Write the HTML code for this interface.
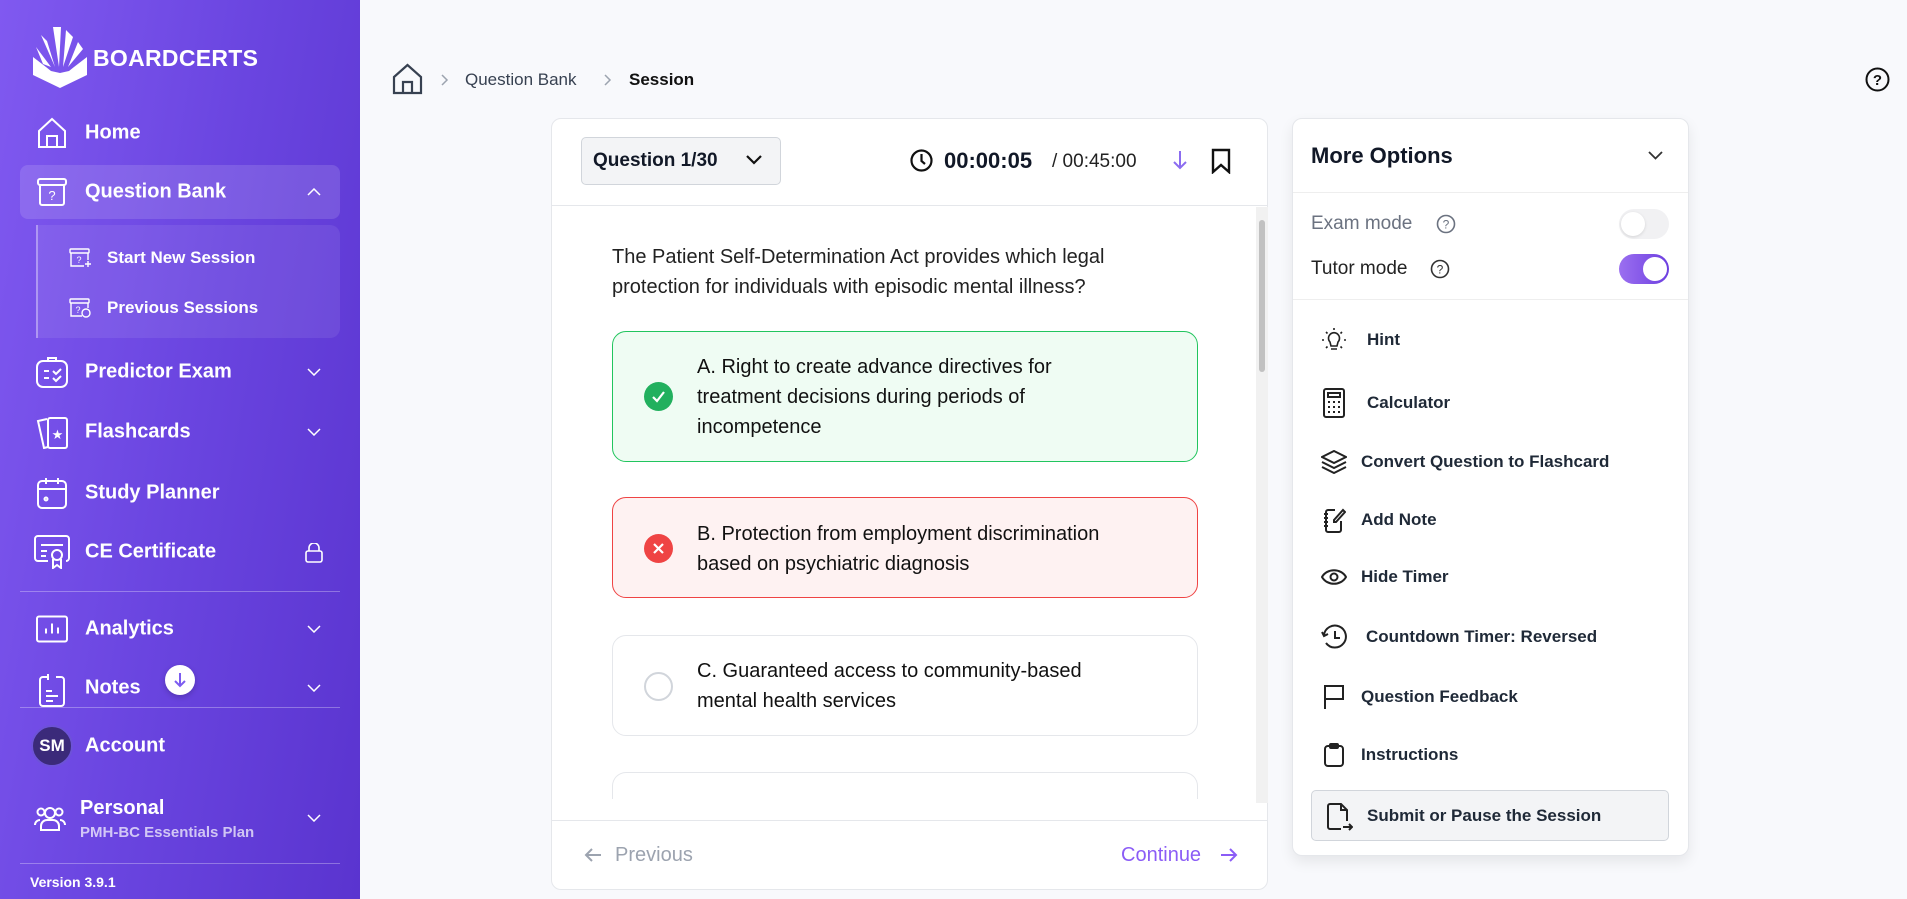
<!DOCTYPE html>
<html><head><meta charset="utf-8"><style>
*{box-sizing:border-box;margin:0;padding:0}
body{width:1907px;height:899px;overflow:hidden;background:#f8f9fc;font-family:"Liberation Sans",sans-serif;position:relative;color:#111827}
.sb{position:absolute;left:0;top:0;width:360px;height:899px;background:linear-gradient(100deg,#8059f0 0%,#6a45e0 50%,#5a34cf 100%);color:#fff}
.abs{position:absolute}
.nav{position:absolute;left:85px;font-size:20px;font-weight:bold;transform:translateY(-50%)}
.ic{position:absolute;transform:translate(-50%,-50%)}
.chev{position:absolute;left:314px;transform:translate(-50%,-50%)}
.sub{position:absolute;left:107px;font-size:17px;font-weight:bold;transform:translateY(-50%)}
.hr{position:absolute;left:20px;width:320px;height:1px;background:rgba(255,255,255,.3)}
.card{position:absolute;background:#fff;border:1px solid #e5e7eb;border-radius:10px}
.opt{position:absolute;left:612px;width:586px;border-radius:14px;border:1px solid #e5e7eb;background:#fff}
.opt .t{position:absolute;left:84px;font-size:20px;line-height:30px;color:#111}
.mi{position:absolute;left:1361px;font-size:17px;font-weight:bold;color:#1f2937;transform:translateY(-50%)}
.mic{position:absolute;left:1334px;transform:translate(-50%,-50%)}
</style></head><body>
<div class="sb">
 <svg class="abs" style="left:33px;top:27px" width="54" height="61" viewBox="0 0 54 61"><path d="M0 30 L13 40 L18 44 L27 46 L36 44 L41 40 L54 30 L54 48 L27 61 L0 48Z" fill="#fff"/><path d="M3 20 L18 40 L10 37Z M8 8 L22 40 L14 14Z M20 0 L28 0 L26 40Z M33 3 L40 10 L30 40Z M45 15 L50 22 L35 40Z" fill="#fff"/></svg>
 <div class="abs" style="left:93px;top:45px;font-size:23px;font-weight:bold;letter-spacing:0.3px">BOARDCERTS</div>

 <svg class="ic" style="left:52px;top:133px" width="30" height="32" viewBox="0 0 30 32" fill="none" stroke="#fff" stroke-width="2"><path d="M2 14 L15 2 L28 14 V30 H2Z M10 30 V19 H20 V30"/></svg>
 <div class="nav" style="top:133px">Home</div>

 <div class="abs" style="left:20px;top:165px;width:320px;height:54px;background:rgba(255,255,255,.13);border-radius:8px"></div>
 <svg class="ic" style="left:52px;top:192px" width="30" height="28" viewBox="0 0 30 28" fill="none" stroke="#fff" stroke-width="2"><rect x="1" y="1" width="28" height="6" rx="2"/><path d="M3 7 V25 a2 2 0 0 0 2 2 H25 a2 2 0 0 0 2 -2 V7"/><text x="15" y="22" fill="#fff" stroke="none" font-size="13" text-anchor="middle" font-family="Liberation Sans">?</text></svg>
 <div class="nav" style="top:192px">Question Bank</div>
 <svg class="chev" style="top:192px" width="14" height="8" viewBox="0 0 14 8" fill="none" stroke="#fff" stroke-width="1.5"><path d="M1 7 L7 1 L13 7"/></svg>

 <div class="abs" style="left:36px;top:225px;width:304px;height:113px;background:rgba(255,255,255,.08);border-radius:0 10px 10px 0;border-left:2px solid rgba(255,255,255,.35)"></div>
 <svg class="ic" style="left:80px;top:258px" width="22" height="20" viewBox="0 0 22 20" fill="none" stroke="#fff" stroke-width="1.4"><rect x="1" y="1" width="19" height="4" rx="1"/><path d="M2 5 V18 H15 M19 5 V12 M16 16 H22 M19 13 V19"/><text x="10" y="15" fill="#fff" stroke="none" font-size="9" text-anchor="middle">?</text></svg>
 <div class="sub" style="top:258px">Start New Session</div>
 <svg class="ic" style="left:80px;top:308px" width="22" height="20" viewBox="0 0 22 20" fill="none" stroke="#fff" stroke-width="1.4"><rect x="1" y="1" width="19" height="4" rx="1"/><path d="M2 5 V18 H13 M19 5 V10"/><circle cx="17" cy="15" r="4"/><text x="9" y="15" fill="#fff" stroke="none" font-size="9" text-anchor="middle">?</text></svg>
 <div class="sub" style="top:308px">Previous Sessions</div>

 <svg class="ic" style="left:52px;top:372px" width="32" height="32" viewBox="0 0 32 32" fill="none" stroke="#fff" stroke-width="2"><rect x="1" y="5" width="30" height="26" rx="6"/><path d="M12 5 V2 H20 V5 M8 15 H13 M8 22 H13 M17 15 l3 3 l5 -5 M17 22 l3 3 l5 -5"/></svg>
 <div class="nav" style="top:372px">Predictor Exam</div>
 <svg class="chev" style="top:372px" width="14" height="8" viewBox="0 0 14 8" fill="none" stroke="#fff" stroke-width="1.5"><path d="M1 1 L7 7 L13 1"/></svg>

 <svg class="ic" style="left:52px;top:432px" width="34" height="34" viewBox="0 0 34 34" fill="none" stroke="#fff" stroke-width="2"><path d="M12 4 L3 6 L9 33 L13 32"/><rect x="13" y="3" width="19" height="30" rx="2"/><text x="22.5" y="24" fill="#fff" stroke="none" font-size="13" text-anchor="middle">★</text></svg>
 <div class="nav" style="top:432px">Flashcards</div>
 <svg class="chev" style="top:432px" width="14" height="8" viewBox="0 0 14 8" fill="none" stroke="#fff" stroke-width="1.5"><path d="M1 1 L7 7 L13 1"/></svg>

 <svg class="ic" style="left:52px;top:493px" width="30" height="32" viewBox="0 0 30 32" fill="none" stroke="#fff" stroke-width="2"><rect x="1" y="4" width="28" height="27" rx="4"/><path d="M1 12 H29 M9 1 V7 M21 1 V7"/><circle cx="9" cy="22" r="1.5"/></svg>
 <div class="nav" style="top:493px">Study Planner</div>

 <svg class="ic" style="left:52px;top:552px" width="36" height="34" viewBox="0 0 36 34" fill="none" stroke="#fff" stroke-width="2"><path d="M14 26 H4 a3 3 0 0 1 -3 -3 V4 a3 3 0 0 1 3 -3 H32 a3 3 0 0 1 3 3 V23 a3 3 0 0 1 -3 3 H32 M7 10 H29 M7 16 H13 M7 21 H12"/><circle cx="23" cy="20" r="5"/><path d="M19 24 V33 L23 30 L27 33 V24"/></svg>
 <div class="nav" style="top:552px">CE Certificate</div>
 <svg class="ic" style="left:314px;top:553px" width="18" height="20" viewBox="0 0 18 20" fill="none" stroke="#fff" stroke-width="1.6"><rect x="1" y="8" width="16" height="11" rx="2"/><path d="M4 8 V5 a5 5 0 0 1 10 0 V8"/></svg>

 <div class="hr" style="top:591px"></div>

 <svg class="ic" style="left:52px;top:629px" width="32" height="27" viewBox="0 0 32 27" fill="none" stroke="#fff" stroke-width="2"><rect x="1" y="1" width="30" height="25" rx="2"/><path d="M10 18 V13 M16 18 V8 M22 18 V12"/></svg>
 <div class="nav" style="top:629px">Analytics</div>
 <svg class="chev" style="top:629px" width="14" height="8" viewBox="0 0 14 8" fill="none" stroke="#fff" stroke-width="1.5"><path d="M1 1 L7 7 L13 1"/></svg>

 <svg class="ic" style="left:52px;top:690px" width="26" height="34" viewBox="0 0 26 34" fill="none" stroke="#fff" stroke-width="2"><path d="M9 4 H4 a3 3 0 0 0 -3 3 V30 a3 3 0 0 0 3 3 H22 a3 3 0 0 0 3 -3 V7 a3 3 0 0 0 -3 -3 H17 M9 1 V7 M7 18 H13 M7 23 H19 M7 28 H14"/></svg>
 <div class="nav" style="top:688px">Notes</div>
 <svg class="chev" style="top:688px" width="14" height="8" viewBox="0 0 14 8" fill="none" stroke="#fff" stroke-width="1.5"><path d="M1 1 L7 7 L13 1"/></svg>
 <div class="abs" style="left:165px;top:665px;width:30px;height:30px;border-radius:50%;background:#fff;box-shadow:0 2px 6px rgba(0,0,0,.2)"></div>
 <svg class="abs" style="left:172px;top:671px" width="16" height="18" viewBox="0 0 16 18" fill="none" stroke="#7c5cf0" stroke-width="2"><path d="M8 2 V15 M3 10 L8 15 L13 10"/></svg>

 <div class="hr" style="top:707px"></div>

 <div class="abs" style="left:31px;top:725px;width:42px;height:42px;border-radius:50%;background:#3b2a7a;border:2px solid #6d52d8;font-size:17px;font-weight:bold;text-align:center;line-height:38px">SM</div>
 <div class="nav" style="top:746px">Account</div>

 <svg class="ic" style="left:50px;top:818px" width="32" height="28" viewBox="0 0 32 28" fill="none" stroke="#fff" stroke-width="2"><circle cx="16" cy="9" r="5"/><path d="M7 26 V22 a6 6 0 0 1 6 -6 H19 a6 6 0 0 1 6 6 V26Z"/><circle cx="7" cy="8" r="3.5"/><circle cx="25" cy="8" r="3.5"/><path d="M1 21 a5 5 0 0 1 5 -5 M31 21 a5 5 0 0 0 -5 -5"/></svg>
 <div class="abs" style="left:80px;top:797px;font-size:20px;font-weight:bold">Personal</div>
 <div class="abs" style="left:80px;top:824px;font-size:15px;color:rgba(255,255,255,.7);font-weight:bold">PMH-BC Essentials Plan</div>
 <svg class="chev" style="top:818px" width="14" height="8" viewBox="0 0 14 8" fill="none" stroke="#fff" stroke-width="1.5"><path d="M1 1 L7 7 L13 1"/></svg>

 <div class="hr" style="top:863px"></div>
 <div class="abs" style="left:30px;top:874px;font-size:14px;font-weight:bold">Version 3.9.1</div>
</div>

<!-- breadcrumb -->
<svg class="abs" style="left:392px;top:63px" width="31" height="32" viewBox="0 0 31 32" fill="none" stroke="#374151" stroke-width="2.2"><path d="M2 14 L15.5 2 L29 14 V30 H2Z M11 30 V19 H20 V30"/></svg>
<svg class="abs" style="left:441px;top:74px" width="8" height="12" viewBox="0 0 8 12" fill="none" stroke="#9ca3af" stroke-width="1.5"><path d="M1 1 L6 6 L1 11"/></svg>
<div class="abs" style="left:465px;top:70px;color:#374151;font-size:17px">Question Bank</div>
<svg class="abs" style="left:604px;top:74px" width="8" height="12" viewBox="0 0 8 12" fill="none" stroke="#9ca3af" stroke-width="1.5"><path d="M1 1 L6 6 L1 11"/></svg>
<div class="abs" style="left:629px;top:70px;color:#111;font-size:17px;font-weight:bold">Session</div>
<svg class="abs" style="left:1865px;top:67px" width="25" height="25" viewBox="0 0 25 25" fill="none" stroke="#111" stroke-width="2"><circle cx="12.5" cy="12.5" r="11"/><text x="12.5" y="18" fill="#111" stroke="none" font-size="15" font-weight="bold" text-anchor="middle">?</text></svg>

<!-- main card -->
<div class="card" style="left:551px;top:118px;width:717px;height:772px"></div>
<div class="abs" style="left:552px;top:205px;width:715px;height:1px;background:#e5e7eb"></div>
<div class="abs" style="left:581px;top:137px;width:200px;height:48px;background:#f3f4f6;border:1px solid #d1d5db;border-radius:5px;font-size:19px;font-weight:bold;line-height:46px;padding-left:11px">Question 1/30</div>
<svg class="abs" style="left:746px;top:155px" width="16" height="10" viewBox="0 0 16 10" fill="none" stroke="#111" stroke-width="2.2"><path d="M1 1 L8 8 L15 1"/></svg>
<svg class="abs" style="left:910px;top:149px" width="23" height="23" viewBox="0 0 23 23" fill="none" stroke="#111" stroke-width="2.2"><circle cx="11.5" cy="11.5" r="10"/><path d="M11.5 5 V12 L15 15"/></svg>
<div class="abs" style="left:944px;top:148px;font-size:22px;font-weight:bold">00:00:05</div>
<div class="abs" style="left:1052px;top:151px;font-size:19px;color:#222">/ 00:45:00</div>
<svg class="abs" style="left:1172px;top:150px" width="16" height="20" viewBox="0 0 16 20" fill="none" stroke="#8b6cf0" stroke-width="2"><path d="M8 1 V18 M2 12 L8 18 L14 12"/></svg>
<svg class="abs" style="left:1211px;top:148px" width="20" height="26" viewBox="0 0 20 26" fill="none" stroke="#111" stroke-width="2.4"><path d="M2 2 H18 V24 L10 17 L2 24Z"/></svg>

<div class="abs" style="left:1256px;top:207px;width:12px;height:596px;background:#f1f1f1"></div>
<div class="abs" style="left:1259px;top:220px;width:6px;height:152px;background:#c1c1c1;border-radius:3px"></div>

<div class="abs" style="left:612px;top:242px;font-size:20px;line-height:30px;color:#222;width:560px">The Patient Self-Determination Act provides which legal protection for individuals with episodic mental illness?</div>

<div class="opt" style="top:331px;height:131px;background:#effcf3;border-color:#22c55e">
 <div class="abs" style="left:31px;top:50px;width:29px;height:29px;border-radius:50%;background:#22b05e"></div>
 <svg class="abs" style="left:38px;top:57px" width="15" height="15" viewBox="0 0 15 15" fill="none" stroke="#fff" stroke-width="2.2"><path d="M2 8 L6 12 L13 3"/></svg>
 <div class="t" style="top:20px;width:420px">A. Right to create advance directives for treatment decisions during periods of incompetence</div>
</div>
<div class="opt" style="top:497px;height:101px;background:#fef2f2;border-color:#ef4444">
 <div class="abs" style="left:31px;top:36px;width:29px;height:29px;border-radius:50%;background:#ef4444"></div>
 <svg class="abs" style="left:40px;top:45px" width="11" height="11" viewBox="0 0 11 11" fill="none" stroke="#fff" stroke-width="2.2"><path d="M1 1 L10 10 M10 1 L1 10"/></svg>
 <div class="t" style="top:21px;width:430px">B. Protection from employment discrimination based on psychiatric diagnosis</div>
</div>
<div class="opt" style="top:635px;height:101px">
 <div class="abs" style="left:31px;top:36px;width:29px;height:29px;border-radius:50%;border:2px solid #d1d5db"></div>
 <div class="t" style="top:20px;width:430px">C. Guaranteed access to community-based mental health services</div>
</div>
<div class="abs" style="left:612px;top:772px;width:586px;height:27px;border:1px solid #e5e7eb;border-bottom:none;border-radius:14px 14px 0 0;background:#fff"></div>

<div class="abs" style="left:552px;top:820px;width:715px;height:1px;background:#e5e7eb"></div>
<svg class="abs" style="left:584px;top:847px" width="18" height="16" viewBox="0 0 18 16" fill="none" stroke="#9ca3af" stroke-width="2"><path d="M17 8 H2 M8 2 L2 8 L8 14"/></svg>
<div class="abs" style="left:615px;top:844px;font-size:20px;color:#9ca3af">Previous</div>
<div class="abs" style="left:1121px;top:844px;font-size:20px;color:#8b5cf6">Continue</div>
<svg class="abs" style="left:1220px;top:847px" width="18" height="16" viewBox="0 0 18 16" fill="none" stroke="#8b5cf6" stroke-width="2"><path d="M1 8 H16 M10 2 L16 8 L10 14"/></svg>

<!-- right panel -->
<div class="card" style="left:1292px;top:118px;width:397px;height:738px;box-shadow:0 6px 14px rgba(0,0,0,.08)"></div>
<div class="abs" style="left:1311px;top:143px;font-size:22px;font-weight:bold">More Options</div>
<svg class="abs" style="left:1648px;top:151px" width="15" height="9" viewBox="0 0 15 9" fill="none" stroke="#333" stroke-width="1.8"><path d="M1 1 L7.5 7.5 L14 1"/></svg>
<div class="abs" style="left:1293px;top:192px;width:395px;height:1px;background:#eee"></div>
<div class="abs" style="left:1311px;top:213px;font-size:19px;color:#6b7280">Exam mode</div>
<svg class="abs" style="left:1436px;top:214px" width="20" height="20" viewBox="0 0 20 20" fill="none" stroke="#6b7280" stroke-width="1.6"><circle cx="10" cy="10" r="8.5"/><text x="10" y="14.5" fill="#6b7280" stroke="none" font-size="12" text-anchor="middle">?</text></svg>
<div class="abs" style="left:1619px;top:209px;width:50px;height:30px;border-radius:15px;background:#f1f1f3"></div>
<div class="abs" style="left:1621px;top:212px;width:24px;height:24px;border-radius:50%;background:#fff;box-shadow:0 1px 3px rgba(0,0,0,.12)"></div>
<div class="abs" style="left:1311px;top:258px;font-size:19px;color:#222">Tutor mode</div>
<svg class="abs" style="left:1430px;top:259px" width="20" height="20" viewBox="0 0 20 20" fill="none" stroke="#333" stroke-width="1.6"><circle cx="10" cy="10" r="8.5"/><text x="10" y="14.5" fill="#333" stroke="none" font-size="12" text-anchor="middle">?</text></svg>
<div class="abs" style="left:1619px;top:254px;width:50px;height:30px;border-radius:15px;background:linear-gradient(90deg,#9b6ff0,#6d3fe0)"></div>
<div class="abs" style="left:1643px;top:257px;width:24px;height:24px;border-radius:50%;background:#fff"></div>
<div class="abs" style="left:1293px;top:299px;width:395px;height:1px;background:#eee"></div>

<svg class="mic" style="top:340px" width="26" height="26" viewBox="0 0 26 26" fill="none" stroke="#222" stroke-width="1.6"><path d="M9 15 a5.5 5.5 0 1 1 8 0 L16 19 H10Z M10 22 H16 M13 1 V3 M3 13 H1 M25 13 H23 M5 5 L6.5 6.5 M21 5 L19.5 6.5 M5 21 L6.5 19.5 M21 21 L19.5 19.5"/></svg>
<div class="mi" style="top:340px;left:1367px">Hint</div>
<svg class="mic" style="top:403px" width="22" height="30" viewBox="0 0 22 30" fill="none" stroke="#222" stroke-width="2"><rect x="1" y="1" width="20" height="28" rx="2"/><rect x="5" y="5" width="12" height="4"/><path d="M5 14h2M10 14h2M15 14h2M5 19h2M10 19h2M15 19h2M5 24h2M10 24h2M15 24h2"/></svg>
<div class="mi" style="top:403px;left:1367px">Calculator</div>
<svg class="mic" style="top:462px" width="26" height="24" viewBox="0 0 26 24" fill="none" stroke="#222" stroke-width="2"><path d="M13 1 L25 7 L13 13 L1 7Z M1 12 L13 18 L25 12 M1 17 L13 23 L25 17"/></svg>
<div class="mi" style="top:462px">Convert Question to Flashcard</div>
<svg class="mic" style="top:520px" width="24" height="26" viewBox="0 0 24 26" fill="none" stroke="#222" stroke-width="2"><path d="M13 3 H6 a2 2 0 0 0 -2 2 V23 a2 2 0 0 0 2 2 H17 a2 2 0 0 0 2 -2 V14 M2 7h4M2 11h4M2 15h4M2 19h4M12 13 L21 3 L23 5 L14 15 H12Z"/></svg>
<div class="mi" style="top:520px">Add Note</div>
<svg class="mic" style="top:577px" width="26" height="18" viewBox="0 0 26 18" fill="none" stroke="#222" stroke-width="2"><path d="M1 9 C6 0 20 0 25 9 C20 18 6 18 1 9Z"/><circle cx="13" cy="9" r="3.5"/></svg>
<div class="mi" style="top:577px">Hide Timer</div>
<svg class="mic" style="top:637px" width="26" height="26" viewBox="0 0 26 26" fill="none" stroke="#222" stroke-width="2"><path d="M3 11 A11 11 0 1 1 5 19 M1 8 L3 12 L7 10 M14 7 V14 H19"/></svg>
<div class="mi" style="top:637px;left:1366px">Countdown Timer: Reversed</div>
<svg class="mic" style="top:697px" width="22" height="26" viewBox="0 0 22 26" fill="none" stroke="#222" stroke-width="2"><path d="M2 25 V2 H20 V15 H2"/></svg>
<div class="mi" style="top:697px">Question Feedback</div>
<svg class="mic" style="top:755px" width="20" height="24" viewBox="0 0 20 24" fill="none" stroke="#222" stroke-width="2"><rect x="1" y="3" width="18" height="20" rx="3"/><rect x="6" y="1" width="8" height="4" rx="1"/></svg>
<div class="mi" style="top:755px">Instructions</div>
<div class="abs" style="left:1311px;top:790px;width:358px;height:51px;background:#f3f4f6;border:1px solid #d1d5db;border-radius:5px"></div>
<svg class="mic" style="top:817px;left:1340px" width="26" height="28" viewBox="0 0 26 28" fill="none" stroke="#222" stroke-width="2"><path d="M14 26 H3 a2 2 0 0 1 -2 -2 V3 a2 2 0 0 1 2 -2 H14 L20 7 V18 M14 1 V7 H20 M16 24 H25 M22 21 L25 24 L22 27"/></svg>
<div class="mi" style="top:816px;left:1367px">Submit or Pause the Session</div>
</body></html>
